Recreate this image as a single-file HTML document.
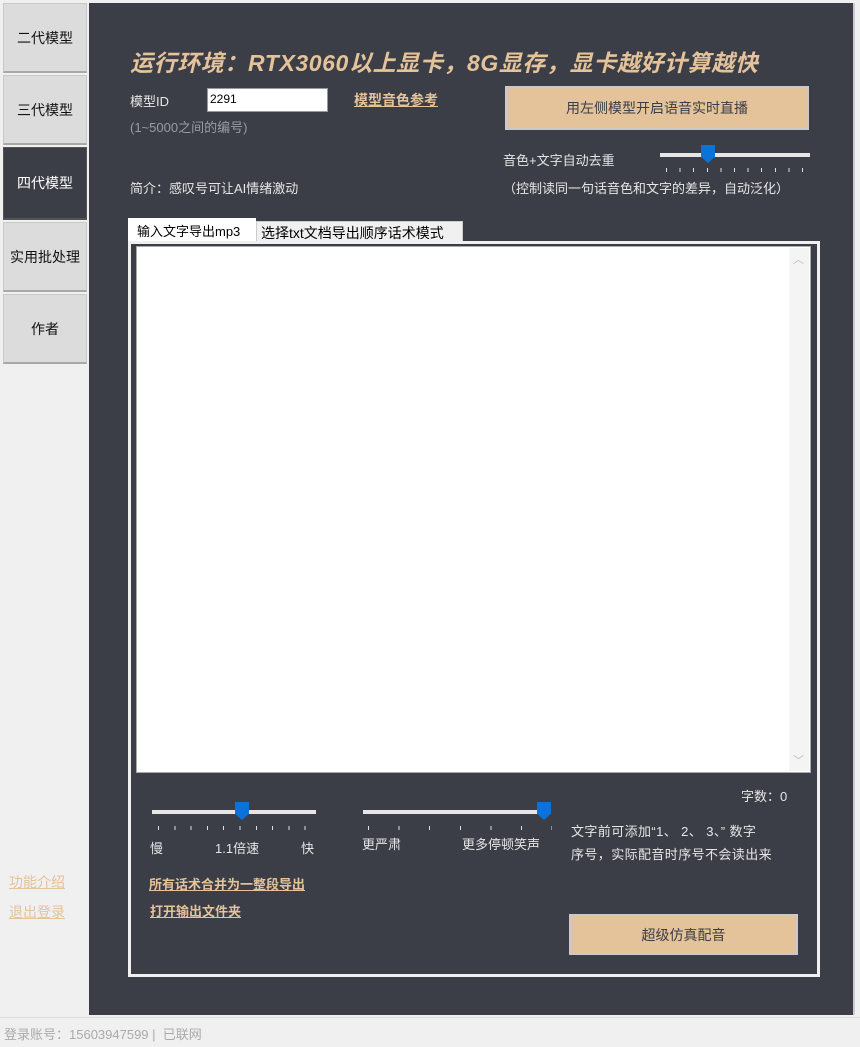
<!DOCTYPE html>
<html><head><meta charset="utf-8"><style>
*{margin:0;padding:0;box-sizing:border-box}
body{width:860px;height:1047px;background:#f0f0f0;position:relative;overflow:hidden;font-family:"Liberation Sans","Noto Sans CJK SC",sans-serif;font-size:13px}
.a{position:absolute}
.sb{position:absolute;left:3px;width:84px;background:#dcdcdc;border:1px solid #c8c8c8;border-bottom:2px solid #a8a8a8;color:#111;font-size:14px;display:flex;align-items:center;justify-content:center}
.main{position:absolute;left:89px;top:3px;width:766px;height:1012px;background:#3b3e46;border-right:2px solid #c8ccd0}
.t{color:#e6e6e6;font-size:13px;white-space:nowrap}
.lk{color:#e4c29a;text-decoration:underline;font-weight:bold;font-size:14px;white-space:nowrap}
.btn{background:#e4c29a;border:2px solid #c9c9c9;color:#3b3e46;font-size:14px;display:flex;align-items:center;justify-content:center}
.track{height:4px;background:#e6e6e6}
.thumb{position:absolute;width:14px;height:18px;background:#0a72d8;clip-path:polygon(0 0,100% 0,100% 65%,50% 100%,0 65%)}
</style></head><body>
<div class="sb" style="top:3px;height:70px">二代模型</div>
<div class="sb" style="top:75px;height:70px">三代模型</div>
<div class="sb" style="top:147px;height:73px;background:#3b3e46;color:#fff;border-color:#555">四代模型</div>
<div class="sb" style="top:222px;height:70px">实用批处理</div>
<div class="sb" style="top:294px;height:70px">作者</div>
<div class="a" style="left:9px;top:872px;color:#e4c29a;text-decoration:underline;font-size:14px">功能介绍</div>
<div class="a" style="left:9px;top:902px;color:#e4c29a;text-decoration:underline;font-size:14px">退出登录</div>

<div class="main"></div>
<div class="a" style="left:130px;top:44px;color:#e4c29a;font-size:23px;letter-spacing:0.6px;font-weight:bold;font-style:italic;white-space:nowrap">运行环境：RTX3060以上显卡，8G显存，显卡越好计算越快</div>
<div class="a t" style="left:130px;top:91px">模型ID</div>
<div class="a" style="left:207px;top:88px;width:121px;height:24px;background:#fff;border:1px solid #999;color:#000;font-size:12px;padding:3px 2px">2291</div>
<div class="a lk" style="left:354px;top:90px">模型音色参考</div>
<div class="a t" style="left:130px;top:117px;color:#9a9ca2">(1~5000之间的编号)</div>
<div class="a btn" style="left:505px;top:86px;width:304px;height:44px">用左侧模型开启语音实时直播</div>
<div class="a t" style="left:503px;top:150px">音色+文字自动去重</div>
<div class="a track" style="left:660px;top:153px;width:150px"></div>
<div class="thumb" style="left:701px;top:145px"></div>
<div class="a" style="left:666px;top:168px;width:145px;height:4px;background:repeating-linear-gradient(90deg,#ddd 0 1px,transparent 1px 13.6px)"></div>
<div class="a t" style="left:503px;top:178px">（控制读同一句话音色和文字的差异，自动泛化）</div>
<div class="a t" style="left:130px;top:178px">简介：感叹号可让AI情绪激动</div>

<div class="a" style="left:128px;top:218px;width:128px;height:25px;background:#fff;color:#000;font-size:13px;padding:3px 9px">输入文字导出mp3</div>
<div class="a" style="left:256px;top:221px;width:207px;height:21px;background:#f0f0f0;color:#000;font-size:14px;padding:1px 4px;border:1px solid #ccc">选择txt文档导出顺序话术模式</div>
<div class="a" style="left:128px;top:241px;width:692px;height:736px;border:3px solid #f0f0f0"></div>
<div class="a" style="left:136px;top:246px;width:675px;height:527px;background:#fff;border:1px solid #aaa"></div>
<div class="a" style="left:789px;top:248px;width:20px;height:523px;background:#f4f4f4"></div>
<div class="a" style="left:793px;top:251px;color:#bbb;font-size:11px">︿</div>
<div class="a" style="left:793px;top:752px;color:#bbb;font-size:11px">﹀</div>

<div class="a t" style="left:741px;top:786px">字数：0</div>
<div class="a track" style="left:152px;top:810px;width:164px"></div>
<div class="thumb" style="left:235px;top:802px"></div>
<div class="a" style="left:158px;top:826px;width:160px;height:4px;background:repeating-linear-gradient(90deg,#ddd 0 1px,transparent 1px 16.3px)"></div>
<div class="a t" style="left:150px;top:838px">慢</div>
<div class="a t" style="left:215px;top:838px">1.1倍速</div>
<div class="a t" style="left:301px;top:838px">快</div>
<div class="a track" style="left:363px;top:810px;width:188px"></div>
<div class="thumb" style="left:537px;top:802px"></div>
<div class="a" style="left:368px;top:826px;width:184px;height:4px;background:repeating-linear-gradient(90deg,#ddd 0 1px,transparent 1px 30.6px)"></div>
<div class="a t" style="left:362px;top:834px">更严肃</div>
<div class="a t" style="left:462px;top:834px">更多停顿笑声</div>
<div class="a t" style="left:571px;top:820px;line-height:23px;letter-spacing:0.4px">文字前可添加“1、 2、 3、” 数字<br>序号，实际配音时序号不会读出来</div>
<div class="a lk" style="left:149px;top:874px;font-size:13px">所有话术合并为一整段导出</div>
<div class="a lk" style="left:150px;top:901px;font-size:13px">打开输出文件夹</div>
<div class="a btn" style="left:569px;top:914px;width:229px;height:41px">超级仿真配音</div>

<div class="a" style="left:0;top:1017px;width:860px;height:30px;background:#f0f0f0;border-top:1px solid #ddd"></div>
<div class="a" style="left:4px;top:1024px;color:#aaa;font-size:13px;white-space:nowrap">登录账号：15603947599 |&nbsp; 已联网</div>
</body></html>
